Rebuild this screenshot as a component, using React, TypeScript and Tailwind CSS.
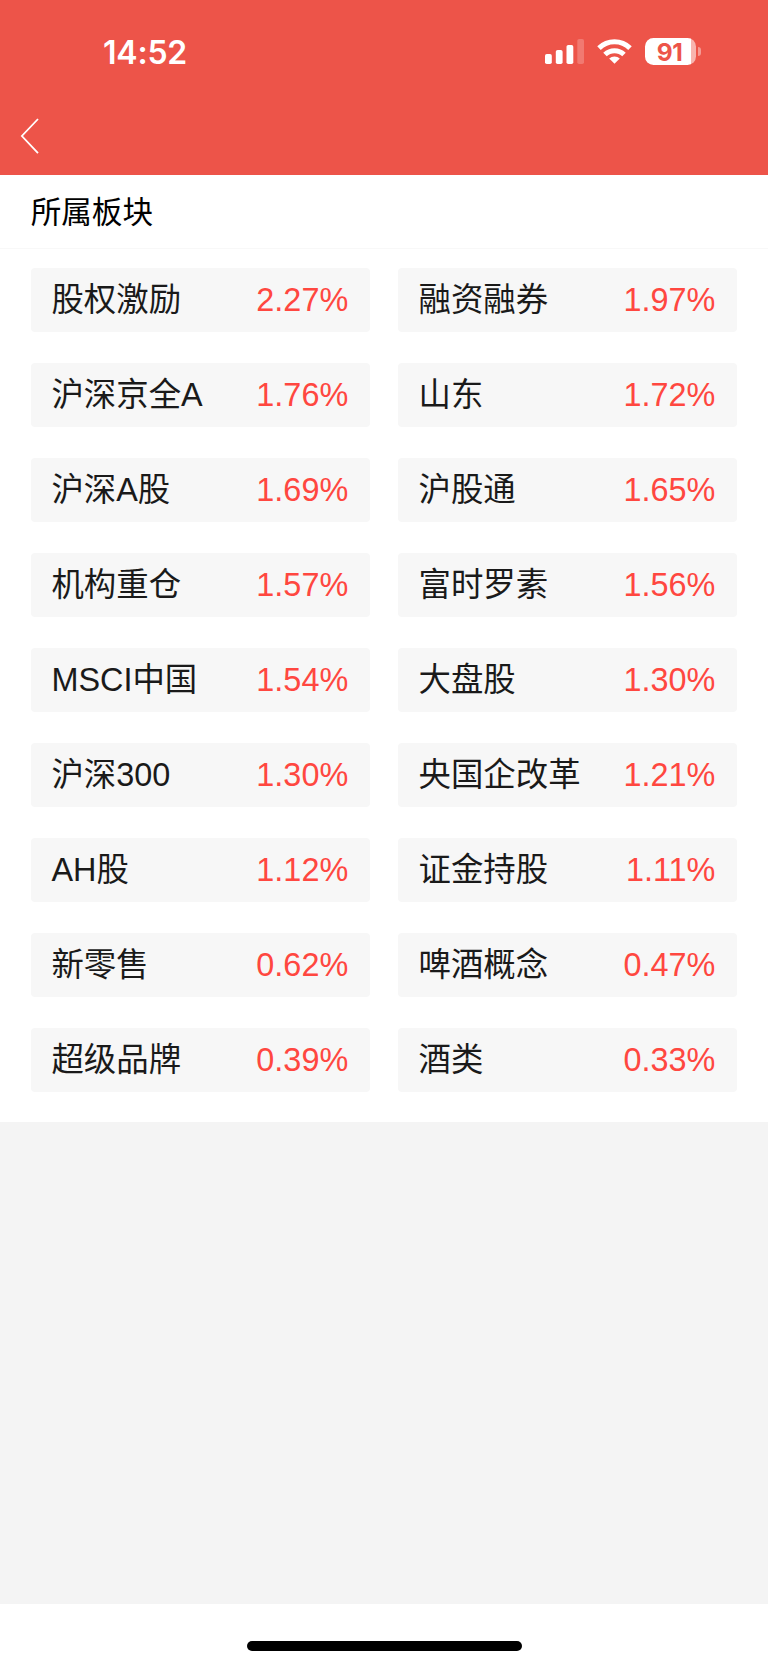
type Sector = { name: string; change: string };

const sectors: Sector[] = [
  { name: "股权激励", change: "2.27%" },
  { name: "融资融券", change: "1.97%" },
  { name: "沪深京全A", change: "1.76%" },
  { name: "山东", change: "1.72%" },
  { name: "沪深A股", change: "1.69%" },
  { name: "沪股通", change: "1.65%" },
  { name: "机构重仓", change: "1.57%" },
  { name: "富时罗素", change: "1.56%" },
  { name: "MSCI中国", change: "1.54%" },
  { name: "大盘股", change: "1.30%" },
  { name: "沪深300", change: "1.30%" },
  { name: "央国企改革", change: "1.21%" },
  { name: "AH股", change: "1.12%" },
  { name: "证金持股", change: "1.11%" },
  { name: "新零售", change: "0.62%" },
  { name: "啤酒概念", change: "0.47%" },
  { name: "超级品牌", change: "0.39%" },
  { name: "酒类", change: "0.33%" },
];

function SignalIcon() {
  return (
    <svg width="39" height="25" viewBox="0 0 39 25" fill="#fff">
      <rect x="0" y="15" width="6.8" height="10" rx="1.8" />
      <rect x="10.8" y="11" width="6.8" height="14" rx="1.8" />
      <rect x="21.5" y="6" width="6.8" height="19" rx="1.8" />
      <rect x="32.3" y="0" width="6.7" height="25" rx="1.8" opacity="0.22" />
    </svg>
  );
}

function WifiIcon() {
  return (
    <svg width="35" height="25" viewBox="0 0 35 25" fill="none" stroke="#fff" strokeWidth="5">
      <path d="M2 9.1A22.2 22.2 0 0 1 33 9.1" />
      <path d="M8 15.5A13.6 13.6 0 0 1 27 15.5" />
      <path d="M17.5 24.8L12.2 19.6A7.6 7.6 0 0 1 22.8 19.6Z" fill="#fff" stroke="none" />
    </svg>
  );
}

function Battery() {
  return (
    <div className="flex items-center">
      <div className="flex h-[27px] w-[51px] items-center justify-center rounded-[8.5px] bg-linear-to-r from-white from-91% to-[#f8b4af] to-91% pr-[2px] font-['Inter',sans-serif] text-[24.5px] leading-[26px] font-bold tracking-[-0.5px] text-[#ed5449]">
        91
      </div>
      <div className="ml-[1.5px] h-[9px] w-[3px] rounded-r-full bg-[#f59a94]" />
    </div>
  );
}

function Header() {
  return (
    <header className="h-[175px] bg-[#ed5449]">
      <div className="flex h-[103px] items-center justify-between pr-[67.5px] pl-[103px]">
        <span className="pt-[2px] font-['Inter',sans-serif] text-[32px] leading-none font-semibold tracking-[-0.2px] text-white">
          14:52
        </span>
        <div className="flex items-center">
          <SignalIcon />
          <div className="ml-[13px]">
            <WifiIcon />
          </div>
          <div className="ml-[13px]">
            <Battery />
          </div>
        </div>
      </div>
      <button className="mt-[14px] ml-[20px] block" aria-label="返回">
        <svg width="20" height="38" viewBox="0 0 20 38" fill="none" stroke="#fff" strokeWidth="1.8">
          <path d="M18 2L1.9 19L18 36.2" />
        </svg>
      </button>
    </header>
  );
}

export default function App() {
  return (
    <div className="flex h-[1665px] w-[768px] flex-col bg-[#f4f4f4] font-['Liberation_Sans','Noto_Sans_CJK_SC',sans-serif]">
      <Header />
      <main className="h-[947px] bg-white">
        <h1 className="flex h-[74px] items-center border-b border-[#f8f8f8] pt-px pl-[30.7px] text-[30.6px] leading-none text-black">
          所属板块
        </h1>
        <div className="grid grid-cols-2 gap-x-[28.6px] gap-y-[31.04px] px-[31.2px] pt-[18.6px]">
          {sectors.map((s) => (
            <div
              key={s.name}
              className="flex h-[64px] items-center justify-between rounded-[4px] bg-[#f7f7f7] pt-[1.4px] pr-[21.5px] pl-[20.3px] text-[32.4px] leading-none whitespace-nowrap"
            >
              <span className="text-[#1a1a1a]">{s.name}</span>
              <span className="text-[#ff4740]">{s.change}</span>
            </div>
          ))}
        </div>
      </main>
      <footer className="mt-auto flex h-[61.4px] justify-center bg-white pt-[37px]">
        <div className="h-[10px] w-[275px] rounded-full bg-black" />
      </footer>
    </div>
  );
}
